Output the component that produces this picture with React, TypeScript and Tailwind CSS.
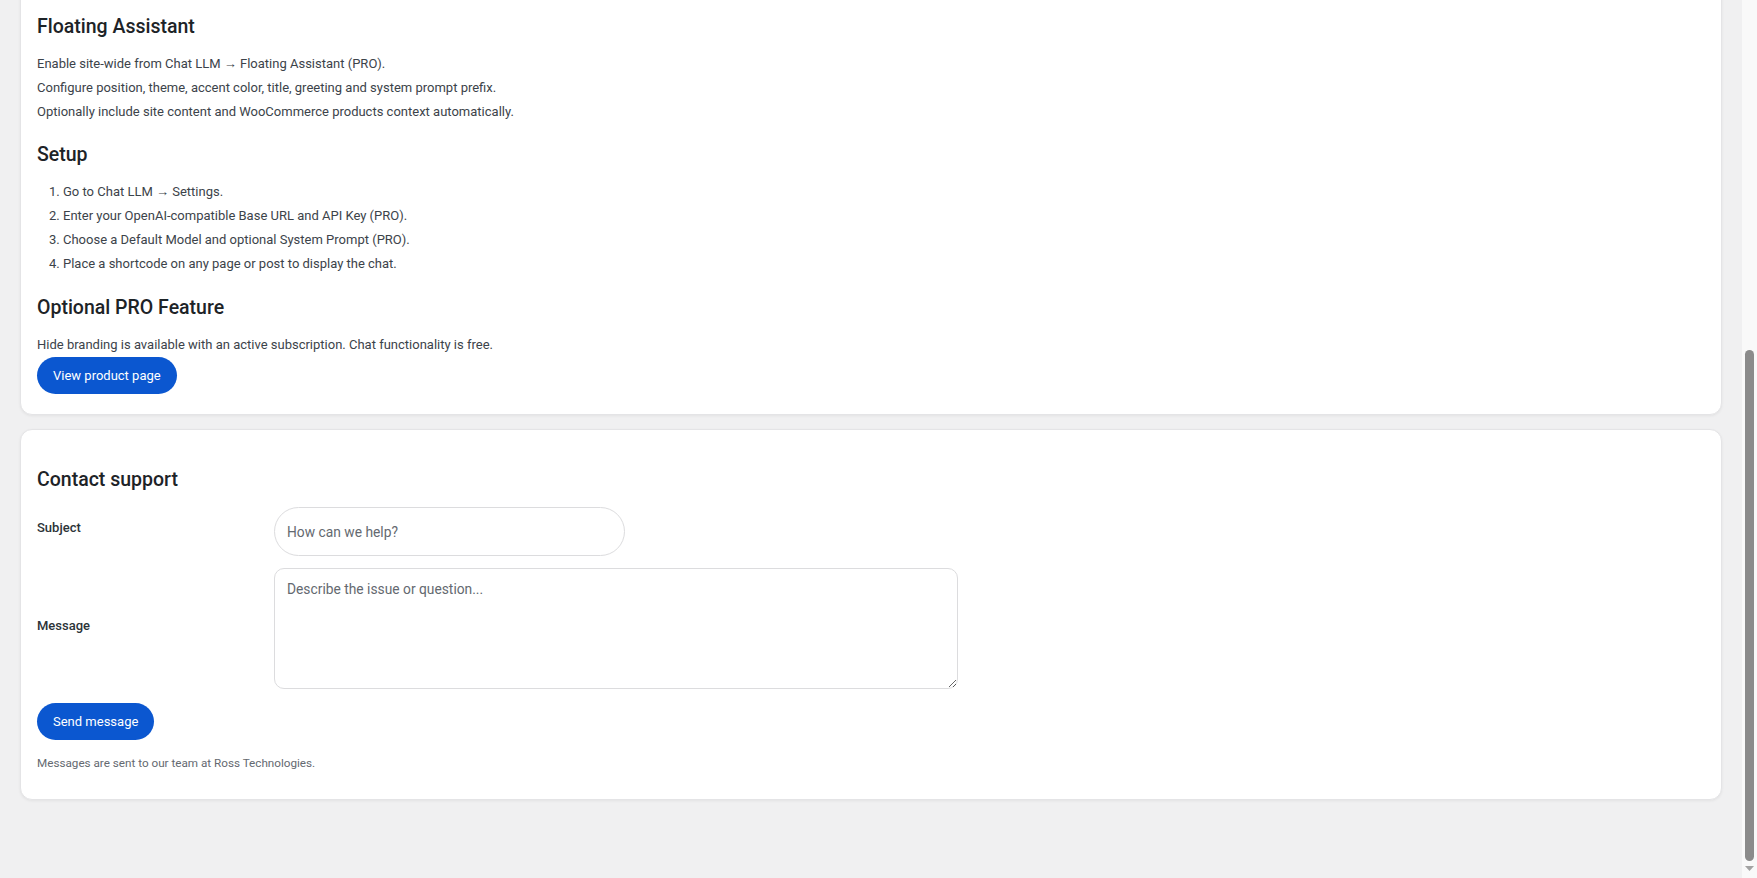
const setupSteps = [
  "Go to Chat LLM → Settings.",
  "Enter your OpenAI-compatible Base URL and API Key (PRO).",
  "Choose a Default Model and optional System Prompt (PRO).",
  "Place a shortcode on any page or post to display the chat.",
];

function SectionTitle({ children, className = "" }: { children: React.ReactNode; className?: string }) {
  return (
    <h2 className={`text-[19.5px] leading-[27px] font-medium text-[#1d2327] ${className}`}>{children}</h2>
  );
}

function PillButton({ children }: { children: React.ReactNode }) {
  return (
    <button
      type="button"
      className="h-[37px] rounded-full bg-[#0b57d0] px-4 text-[13px] font-normal text-white"
    >
      {children}
    </button>
  );
}

export default function App() {
  return (
    <div className="flex h-[878px] w-full overflow-hidden bg-[#f0f0f1] font-['Roboto','Liberation_Sans',sans-serif] text-[13px] text-[#3c434a]">
      <main className="flex-1 px-5">
        {/* product info card, scrolled so its top is out of view */}
        <section className="-mt-5 rounded-xl border border-[#e4e4e6] bg-white px-4 pt-[32px] pb-5 shadow-[0_1px_3px_rgba(0,0,0,0.06)]">
          <SectionTitle>Floating Assistant</SectionTitle>
          <div className="mt-[12px] leading-[24px]">
            <p>Enable site-wide from Chat LLM → Floating Assistant (PRO).</p>
            <p>Configure position, theme, accent color, title, greeting and system prompt prefix.</p>
            <p>Optionally include site content and WooCommerce products context automatically.</p>
          </div>

          <SectionTitle className="mt-[17px]">Setup</SectionTitle>
          <ol className="mt-[12px] list-decimal pl-[26px] leading-[24px]">
            {setupSteps.map((s) => (
              <li key={s}>{s}</li>
            ))}
          </ol>

          <SectionTitle className="mt-[18px]">Optional PRO Feature</SectionTitle>
          <p className="mt-[12px] leading-[24px]">
            Hide branding is available with an active subscription. Chat functionality is free.
          </p>
          <PillButton>View product page</PillButton>
        </section>

        {/* support form */}
        <section className="mt-[14px] rounded-xl border border-[#e4e4e6] bg-white px-4 pt-[36px] pb-[28px] shadow-[0_1px_3px_rgba(0,0,0,0.06)]">
          <SectionTitle>Contact support</SectionTitle>
          <form className="mt-[14px]" onSubmit={(e) => e.preventDefault()}>
            <div className="flex items-center">
              <label className="w-[237px] pb-[7px] text-[13px] font-medium text-[#2c3338]">Subject</label>
              <input
                type="text"
                placeholder="How can we help?"
                className="h-[49px] w-[351px] rounded-full border border-[#dcdcde] bg-white px-3 text-[13.8px] text-[#1d2327] placeholder:text-[#646970] focus:outline-none"
              />
            </div>
            <div className="mt-[12px] flex items-center">
              <label className="w-[237px] pb-[6px] text-[13px] font-medium text-[#2c3338]">Message</label>
              <textarea
                placeholder="Describe the issue or question..."
                className="h-[121px] w-[684px] rounded-[10px] border border-[#dcdcde] bg-white px-3 pt-[10px] text-[13.8px] leading-[20px] text-[#1d2327] placeholder:text-[#646970] focus:outline-none"
              />
            </div>
            <div className="mt-[14px]">
              <PillButton>Send message</PillButton>
            </div>
          </form>
          <p className="mt-[15px] text-[11.7px] leading-[16px] text-[#646970]">
            Messages are sent to our team at Ross Technologies.
          </p>
        </section>
      </main>

      {/* page scrollbar, scrolled to the bottom */}
      <div className="flex w-[15px] flex-col items-center bg-[#f9f9f9] pt-[350px]">
        <div className="h-[511px] w-[9px] rounded-full bg-[#8b8b8b]" />
        <svg className="mt-[5px]" width="9" height="5" viewBox="0 0 9 5">
          <path d="M0 0h9L4.5 5z" fill="#a3a3a3" />
        </svg>
      </div>
    </div>
  );
}
